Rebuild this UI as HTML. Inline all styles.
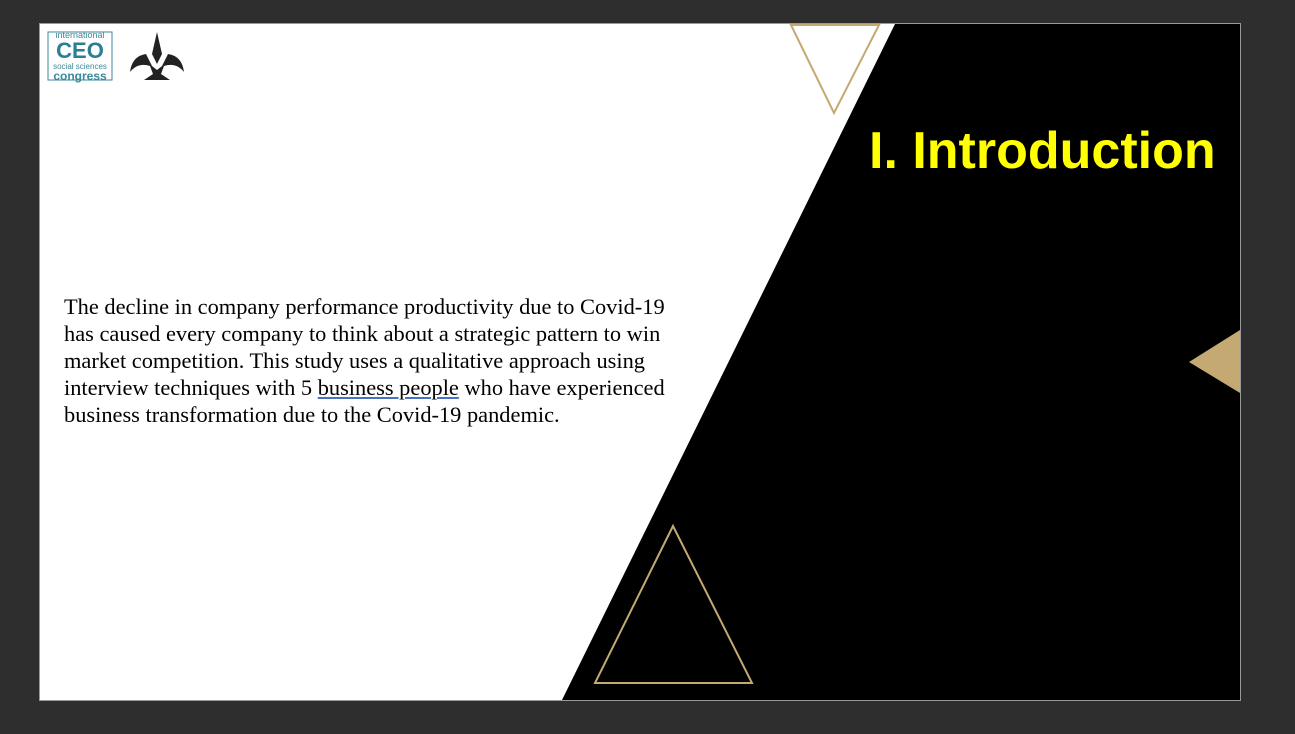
<!DOCTYPE html>
<html><head><style>
body{margin:0;width:1295px;height:734px;background:#2e2e2e;position:relative;overflow:hidden;font-family:"Liberation Serif",serif}
#s{position:absolute;left:40px;top:24px;width:1200px;height:676px;background:#fff;overflow:hidden;outline:1px solid #999}
svg{position:absolute;left:0;top:0}
.t{position:absolute;left:829px;top:97px;color:#ffff00;font:bold 52px "Liberation Sans",sans-serif;white-space:nowrap}
.b{position:absolute;left:24px;top:269px;font-size:22.4px;line-height:27px;color:#000;white-space:nowrap}
.u{text-decoration:underline;text-decoration-color:#4472c4}
</style></head><body>
<div id="s">
<svg width="1200" height="676">
<polygon points="855,0 1200,0 1200,676 522,676" fill="#000"/>
<polygon points="751,1 839,1 794,89" fill="none" stroke="#c4aa72" stroke-width="2"/>
<polygon points="1149,338 1200,306 1200,369" fill="#c4aa72"/>
<polygon points="633,502 555,659 712,659" fill="none" stroke="#c4aa72" stroke-width="2"/>
<rect x="8" y="8" width="64" height="48" fill="#fff" stroke="#3a8a9a" stroke-width="1"/>
<text x="40" y="14" font-size="9" fill="#3a8a9a" text-anchor="middle" font-family="Liberation Sans">international</text>
<text x="40" y="34" font-size="22" font-weight="bold" fill="#2a7f95" text-anchor="middle" font-family="Liberation Sans">CEO</text>
<text x="40" y="45" font-size="8" fill="#3a8a9a" text-anchor="middle" font-family="Liberation Sans">social sciences</text>
<text x="40" y="56" font-size="12" font-weight="bold" fill="#3a8a9a" text-anchor="middle" font-family="Liberation Sans">congress</text>
<path d="M117,8 L112,30 L117,40 L122,30 Z M106,30 Q92,32 90,48 Q98,38 110,42 L113,50 L104,56 L130,56 L121,50 L124,42 Q136,38 144,48 Q142,32 128,30 L122,42 L117,46 L112,42 Z" fill="#222"/>
</svg>
<div class="t">I. Introduction</div>
<div class="b">The decline in company performance productivity due to Covid-19<br>has caused every company to think about a strategic pattern to win<br>market competition. This study uses a qualitative approach using<br>interview techniques with 5 <span class="u">business people</span> who have experienced<br>business transformation due to the Covid-19 pandemic.</div>
</div>
</body></html>
